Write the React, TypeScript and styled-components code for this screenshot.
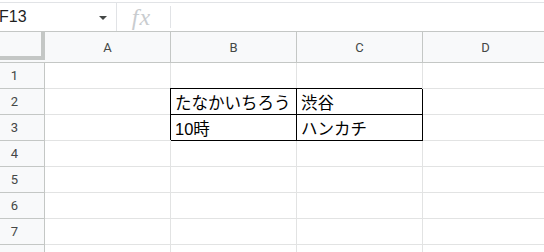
import React from 'react';
import styled, { createGlobalStyle } from 'styled-components';

const GlobalStyle = createGlobalStyle`
  html, body {
    margin: 0;
    padding: 0;
    background: #ffffff;
    overflow: hidden;
  }
  body {
    font-family: "Liberation Sans", "Noto Sans CJK JP", sans-serif;
  }
`;

const Page = styled.div`
  width: 544px;
  height: 252px;
  overflow: hidden;
  background: #ffffff;
`;

const FormulaBar = styled.div`
  margin-top: 2px;
  height: 28px;
  border-top: 1px solid #e1e3e6;
  border-bottom: 1px solid #c4c7c5;
  display: flex;
  align-items: stretch;
`;

const NameBox = styled.div`
  width: 117px;
  box-sizing: border-box;
  border-right: 1px solid #e1e3e6;
  display: flex;
  align-items: center;
  justify-content: space-between;
  padding: 0 9px 0 0;
  font-size: 16px;
  color: #1f1f1f;
  span {
    margin-left: -1px;
  }
`;

const Caret = styled.div`
  width: 0;
  height: 0;
  border-left: 4px solid transparent;
  border-right: 4px solid transparent;
  border-top: 4px solid #444746;
  margin-top: 2px;
`;

const FxBox = styled.div`
  width: 53px;
  display: flex;
  align-items: center;
  justify-content: center;
  padding-right: 4px;
  box-sizing: border-box;
  font-family: "Liberation Serif", serif;
  font-style: italic;
  font-size: 24px;
  color: #c9cccf;
  letter-spacing: 1px;
`;

const Divider = styled.div`
  width: 1px;
  align-self: center;
  height: 22px;
  background: #e1e3e6;
`;

const Sheet = styled.div`
  display: grid;
  grid-template-columns: 45px repeat(4, 126px);
  grid-template-rows: 31px repeat(8, 26px);
`;

const HeaderBase = styled.div`
  background: #f8f9fa;
  box-sizing: border-box;
  display: flex;
  align-items: center;
  font-family: Roboto, "Liberation Sans", sans-serif;
  font-size: 13px;
  color: #444746;
`;

const Corner = styled(HeaderBase)`
  position: relative;
  border-bottom: 1px solid #c4c7c5;
  &::before {
    content: '';
    position: absolute;
    top: 0;
    right: 0;
    width: 4px;
    height: 28px;
    background: #c4c7c5;
  }
  &::after {
    content: '';
    position: absolute;
    left: 0;
    top: 24px;
    width: 45px;
    height: 4px;
    background: #c4c7c5;
  }
`;

const ColHeader = styled(HeaderBase)`
  justify-content: center;
  border-right: 1px solid #c4c7c5;
  border-bottom: 1px solid #c4c7c5;
`;

const RowHeader = styled(HeaderBase)`
  justify-content: center;
  padding-right: 15px;
  border-right: 1px solid #c4c7c5;
  border-bottom: 1px solid #c4c7c5;
`;

const Cell = styled.div<{ $boxed?: boolean }>`
  position: relative;
  box-sizing: border-box;
  border-right: 1px solid ${(p) => (p.$boxed ? '#000000' : '#e2e3e3')};
  border-bottom: 1px solid ${(p) => (p.$boxed ? '#000000' : '#e2e3e3')};
  box-shadow: ${(p) => (p.$boxed ? '-1px -1px 0 0 #000000' : 'none')};
  z-index: ${(p) => (p.$boxed ? 1 : 0)};
  display: flex;
  align-items: center;
  padding-left: 4px;
  font-size: 16.5px;
  color: #000000;
  white-space: nowrap;
  overflow: visible;
`;

const columns = ['A', 'B', 'C', 'D'];

const data: Record<string, string> = {
  B2: 'たなかいちろう',
  C2: '渋谷',
  B3: '10時',
  C3: 'ハンカチ',
};

const boxed = new Set(['B2', 'C2', 'B3', 'C3']);

export default function App() {
  const rows = [1, 2, 3, 4, 5, 6, 7, 8];
  return (
    <Page>
      <GlobalStyle />
      <FormulaBar>
        <NameBox>
          <span>F13</span>
          <Caret />
        </NameBox>
        <FxBox>fx</FxBox>
        <Divider />
      </FormulaBar>
      <Sheet>
        <Corner />
        {columns.map((c) => (
          <ColHeader key={c}>{c}</ColHeader>
        ))}
        {rows.map((r) => (
          <React.Fragment key={r}>
            <RowHeader>{r}</RowHeader>
            {columns.map((c) => {
              const id = `${c}${r}`;
              return (
                <Cell key={id} $boxed={boxed.has(id)}>
                  {data[id]}
                </Cell>
              );
            })}
          </React.Fragment>
        ))}
      </Sheet>
    </Page>
  );
}
